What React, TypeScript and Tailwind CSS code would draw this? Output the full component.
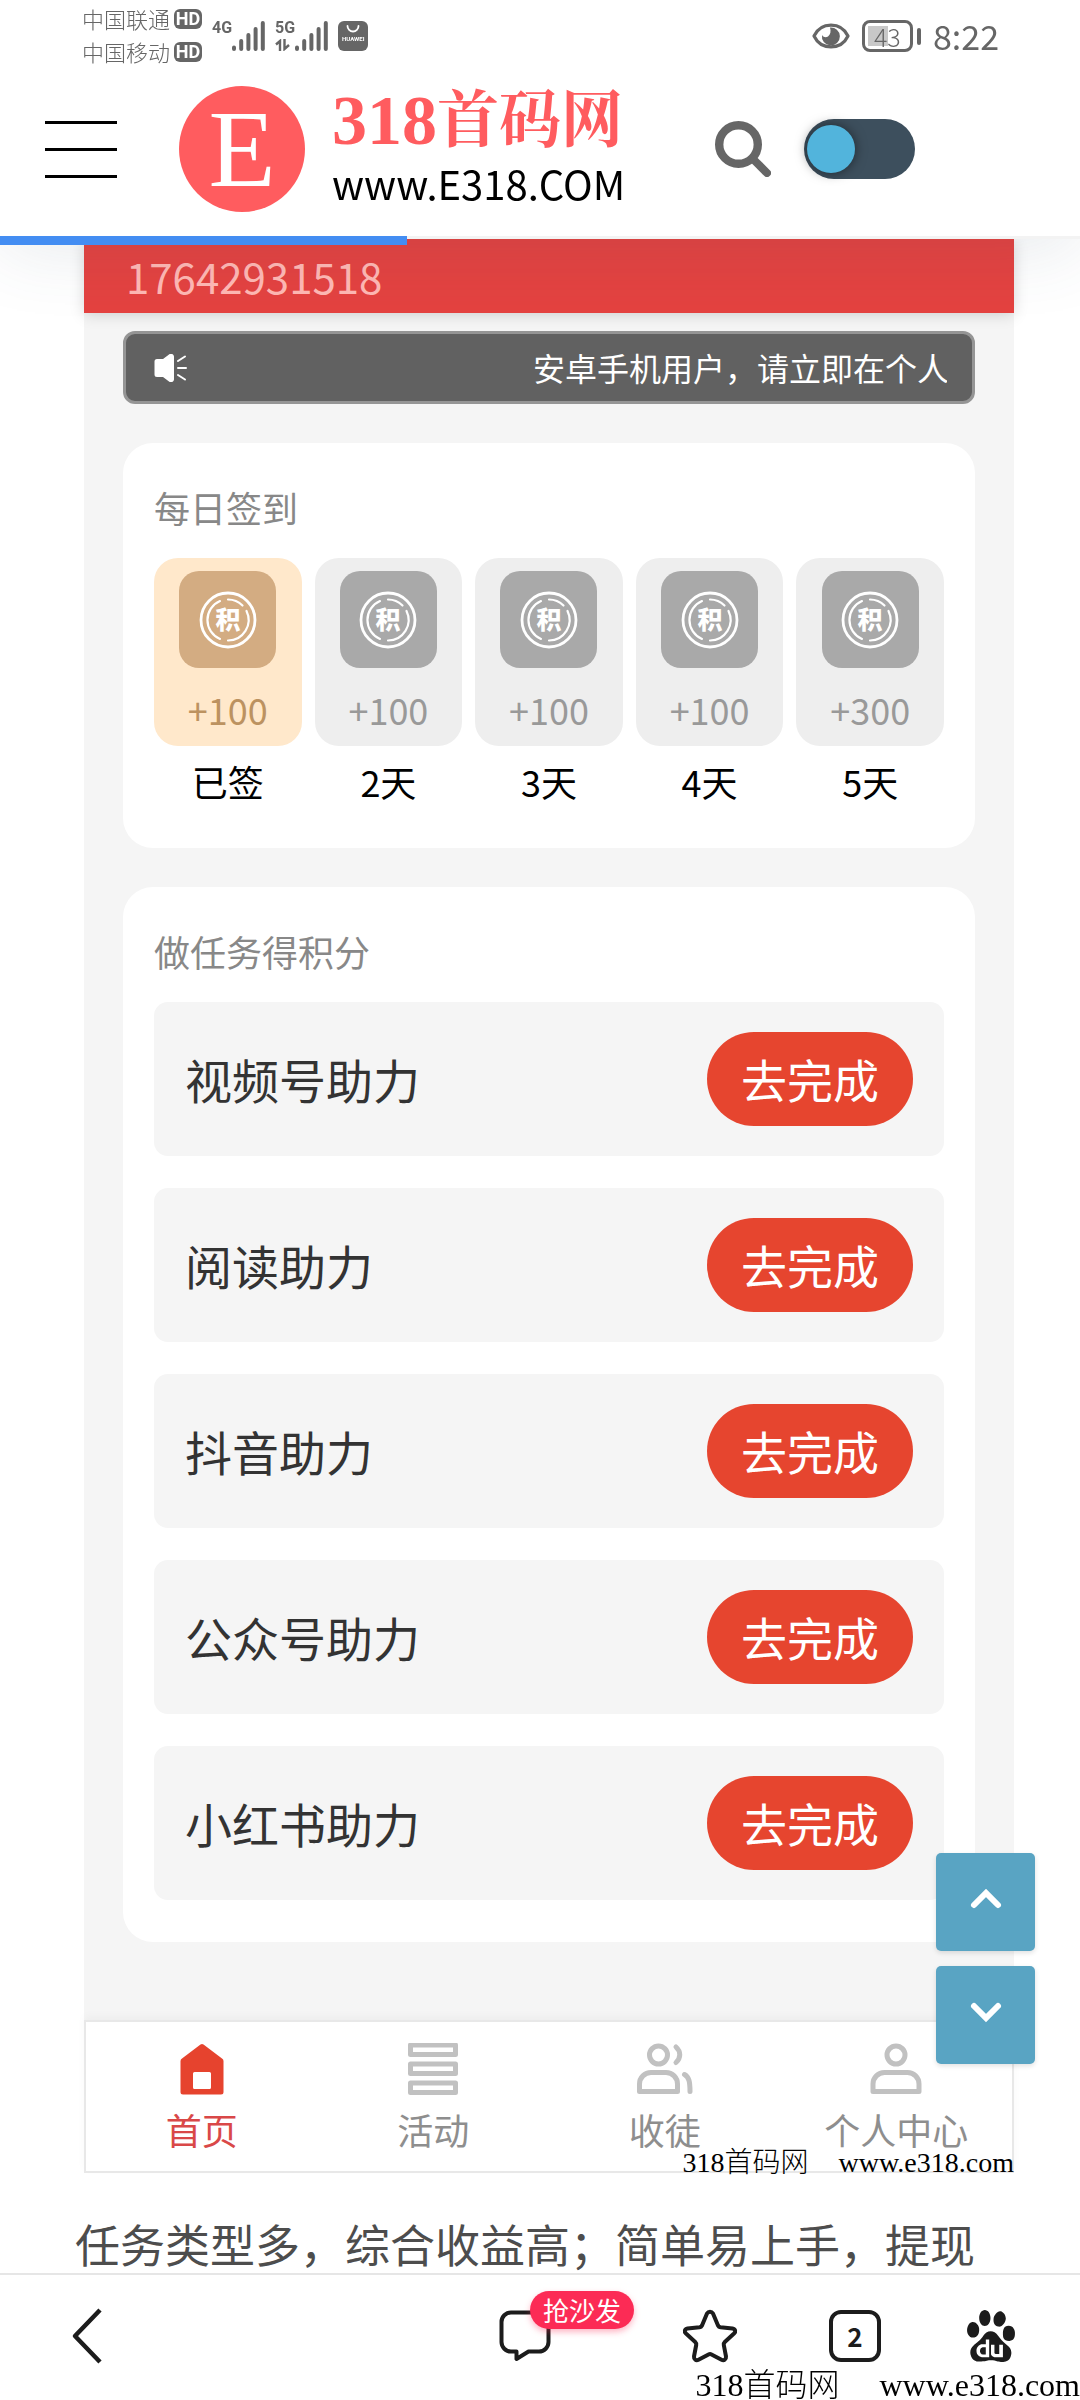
import { useState } from "react";
import clsx from "clsx";
import { SiBaidu } from "react-icons/si";

const loadProgress = 37.7;

const days = [
  { label: "已签", points: "+100", done: true },
  { label: "2天", points: "+100", done: false },
  { label: "3天", points: "+100", done: false },
  { label: "4天", points: "+100", done: false },
  { label: "5天", points: "+300", done: false },
];

const tasks = ["视频号助力", "阅读助力", "抖音助力", "公众号助力", "小红书助力"];

const tabs = [
  { label: "首页", icon: <HomeIcon />, active: true },
  { label: "活动", icon: <ListIcon />, active: false },
  { label: "收徒", icon: <PeopleIcon />, active: false },
  { label: "个人中心", icon: <PersonIcon />, active: false },
];

/* --- ICONS --- */
function HomeIcon() {
  return (
    <svg viewBox="0 0 44 52" className="h-[52px] w-11" fill="#e6432e">
      <path
        fillRule="evenodd"
        d="M20.500 1.500a2.500 2.500 0 0 1 3 0L42 15.500a3 3 0 0 1 1.500 2.500V49a2.500 2.500 0 0 1-2.500 2.500H3A2.500 2.500 0 0 1 .5 49V18A3 3 0 0 1 2 15.500ZM14.500 29a1.500 1.500 0 0 0-1.500 1.500V44.500A1.500 1.500 0 0 0 14.500 46h15a1.500 1.500 0 0 0 1.500-1.500V30.500A1.500 1.500 0 0 0 29.500 29Z"
      />
    </svg>
  );
}

function ListIcon() {
  return (
    <svg viewBox="0 0 50 52" className="h-[52px] w-[50px]" fill="none" stroke="#c1c1c1" strokeWidth="5" strokeLinejoin="round">
      <rect x="2.500" y="2" width="45" height="9.500" />
      <rect x="2.500" y="21" width="45" height="9.500" />
      <rect x="2.500" y="40" width="45" height="9.500" />
    </svg>
  );
}

function PeopleIcon() {
  return (
    <svg viewBox="0 0 56 52" className="h-[52px] w-14" fill="none" stroke="#c1c1c1" strokeWidth="5" strokeLinecap="round" strokeLinejoin="round">
      <circle cx="21.500" cy="12" r="9" />
      <path d="M2.500 48.500V41a11.500 11.500 0 0 1 11.500-11.500H29A11.500 11.500 0 0 1 40.500 41v7.500Z" />
      <path d="M39 4c5 4.500 5 11 0 15.500M47.500 31.500c4.500 2.500 5.500 7 5.500 17" />
    </svg>
  );
}

function PersonIcon() {
  return (
    <svg viewBox="0 0 52 52" className="h-[52px] w-[52px]" fill="none" stroke="#c1c1c1" strokeWidth="5" strokeLinejoin="round">
      <circle cx="26" cy="12" r="9" />
      <path d="M3 48.500V41a11.500 11.500 0 0 1 11.500-11.500H37.500A11.500 11.500 0 0 1 49 41v7.500Z" />
    </svg>
  );
}

function CoinIcon() {
  return (
    <svg viewBox="-29 -29 58 58" className="h-[58px] w-[58px]" fill="none" stroke="#fff" strokeLinecap="round">
      <circle r="27" strokeWidth="2.800" />
      <path strokeWidth="2.200" d="M0-20.500A20.500 20.500 0 0 1 14.500-14.500M18.500-9A20.500 20.500 0 0 1 0 20.500M-8 18.900A20.500 20.500 0 0 1-8-18.900" />
      <text
        y="9"
        textAnchor="middle"
        fill="#fff"
        stroke="none"
        className="font-['Noto_Sans_CJK_SC',sans-serif] text-[25px] font-black"
      >
        积
      </text>
    </svg>
  );
}

function SignalIcon() {
  return (
    <svg viewBox="0 0 33 30" className="h-[30px] w-[33px]" stroke="#666" strokeWidth="4" strokeLinecap="round">
      <path d="M2 26.500v1.500M9.200 20v8M16.400 14v14M23.600 8v20M30.800 2v26" />
    </svg>
  );
}

function DataArrowsIcon() {
  return (
    <svg viewBox="0 0 16 12" className="h-3 w-4" fill="none" stroke="#666" strokeWidth="2.400">
      <path d="M1 5.500 5 2v10M9.500 0v10l4.500-4" />
    </svg>
  );
}

function EyeIcon() {
  return (
    <svg viewBox="0 0 38 26" className="h-[26px] w-[38px]">
      <path d="M2 13C9-1.500 29-1.500 36 13C29 27.500 9 27.500 2 13Z" fill="none" stroke="#666" strokeWidth="3.200" strokeLinejoin="round" />
      <path d="M18 4.500a9 9 0 1 1-8 7.500c1.500 2.500 4 2.800 6 1.500 2.500-1.800 3.200-5.500 2-9Z" fill="#666" />
    </svg>
  );
}

function SpeakerIcon() {
  return (
    <svg viewBox="0 0 33 28" className="h-7 w-[33px]" fill="#fff">
      <path d="M3 5h6l6-4.500a3 3 0 0 1 5 2v23a3 3 0 0 1-5 2L9 23H3a2.500 2.500 0 0 1-2.500-2.500v-13A2.500 2.500 0 0 1 3 5Z" />
      <path d="m24 7 7-4.500M24 14h8M24 21l7 4.500" stroke="#fff" strokeWidth="2" strokeLinecap="round" />
    </svg>
  );
}

/* --- HEADER --- */
function StatusBar() {
  return (
    <div className="flex items-start justify-between pl-[82px] pr-[81px] pt-0.5 text-[#666]">
      <div className="flex">
        <div className="text-[22px] font-light leading-[33px]">
          {["中国联通", "中国移动"].map((carrier) => (
            <div key={carrier} className="flex items-center gap-1">
              {carrier}
              <span className="flex h-5 w-7 items-center justify-center rounded-md bg-[#666] font-['Roboto',sans-serif] text-[18px] font-bold leading-none text-white">
                HD
              </span>
            </div>
          ))}
        </div>
        <div className="ml-2.5 mt-[19px] flex h-[30px] font-['Roboto',sans-serif] text-[16px] font-bold leading-[14px]">
          <span>4G</span>
          <SignalIcon />
          <div className="ml-2.5 flex flex-col justify-between">
            <span>5G</span>
            <DataArrowsIcon />
          </div>
          <SignalIcon />
          <div className="ml-2.5 flex h-[30px] w-[30px] flex-col items-center rounded-md bg-[#666] pt-1 text-white">
            <svg viewBox="0 0 14 8" className="h-2 w-3.5" fill="none" stroke="#fff" strokeWidth="1.800" strokeLinecap="round">
              <path d="M1.500 1a5.500 5.500 0 0 0 11 0" />
            </svg>
            <span className="text-[6px] leading-[12px]">HUAWEI</span>
          </div>
        </div>
      </div>

      <div className="mt-4 flex items-center">
        <EyeIcon />
        <div className="ml-3 flex h-8 w-[51px] items-center rounded-lg border-[3px] border-[#666] p-[3px]">
          <div className="flex h-5 w-5 items-center bg-[#c8c8c8] pl-1.5">
            <span className="text-[25px] font-light leading-none">43</span>
          </div>
        </div>
        <div className="ml-1 h-[17px] w-1 rounded-full bg-[#666]" />
        <span className="ml-3 text-[34px] leading-9">8:22</span>
      </div>
    </div>
  );
}

function Header() {
  const [dark, setDark] = useState(false);

  return (
    <header className="relative z-10 border-b-[3px] border-[#f3f3f3] bg-white shadow-[0_10px_70px_rgba(60,85,105,0.12)]">
      <StatusBar />
      <div className="flex items-center pb-6 pl-[45px] pr-[165px] pt-[18px]">
        <button aria-label="菜单" className="flex w-[72px] flex-col gap-6">
          <span className="h-[3px] bg-black" />
          <span className="h-[3px] bg-black" />
          <span className="h-[3px] bg-black" />
        </button>

        <a href="#" className="ml-[62px] flex items-center gap-[27px]">
          <span className="flex h-[126px] w-[126px] items-center justify-center rounded-full bg-[#ff5c5f] font-['Liberation_Serif',serif] text-[110px] leading-none text-white">
            E
          </span>
          <span className="flex flex-col whitespace-nowrap">
            <span className="flex items-center font-['Liberation_Serif','Noto_Serif_CJK_SC','Noto_Sans_CJK_SC',serif] font-bold leading-[68px] text-[#ff5c5f]">
              <span className="text-[70px]">318</span>
              <span className="text-[62px]">首码网</span>
            </span>
            <span className="text-[40px] leading-[56px] text-black">www.E318.COM</span>
          </span>
        </a>

        <button aria-label="搜索" className="ml-auto">
          <svg viewBox="0 0 56 56" className="h-14 w-14" fill="none" stroke="#666">
            <circle cx="23.500" cy="23.500" r="19.300" strokeWidth="8.400" />
            <path d="m39 39 13 13" strokeWidth="8" strokeLinecap="round" />
          </svg>
        </button>
        <label className="relative ml-[33px] block h-[60px] w-[111px] rounded-full bg-[#3d4f5d]">
          <span className="sr-only">夜间模式</span>
          <input type="checkbox" className="peer sr-only" checked={dark} onChange={() => setDark(!dark)} />
          <span className="absolute left-[3px] top-1.5 h-12 w-12 rounded-full bg-[#52b4dc] shadow-[0_0_12px_rgba(0,0,0,0.5)] peer-checked:left-[60px]" />
        </label>
      </div>
      <div className="absolute left-0 top-full h-[9px] bg-[#438df2]" style={{ width: `${loadProgress}%` }} />
    </header>
  );
}

/* --- APP PANEL --- */
function CheckIn() {
  return (
    <section className="mt-[39px] rounded-[30px] bg-white px-[31px] pb-[41px] pt-[38px]">
      <h2 className="mb-[25px] text-[36px] leading-[52px] text-[#888]">每日签到</h2>
      <div className="grid grid-cols-5 gap-[13px]">
        {days.map((day) => (
          <div key={day.label} className="text-center text-[36px] leading-[52px]">
            <div
              className={clsx(
                "flex flex-col items-center rounded-3xl pb-[11px] pt-[13px]",
                day.done ? "bg-[#ffe8cb] text-[#bc9260]" : "bg-[#eee] text-[#999]"
              )}
            >
              <div
                className={clsx(
                  "mb-[15px] flex h-[97px] w-[97px] items-center justify-center rounded-[20px]",
                  day.done ? "bg-[#d3ac82]" : "bg-[#a9a9a9]"
                )}
              >
                <CoinIcon />
              </div>
              {day.points}
            </div>
            <div className="mt-[9px] text-black">{day.label}</div>
          </div>
        ))}
      </div>
    </section>
  );
}

function TaskList() {
  return (
    <section className="mt-[39px] rounded-[30px] bg-white px-[31px] pb-[42px] pt-[38px]">
      <h2 className="mb-[25px] text-[36px] leading-[52px] text-[#888]">做任务得积分</h2>
      <ul className="flex flex-col gap-8">
        {tasks.map((task) => (
          <li key={task} className="flex items-center justify-between rounded-[14px] bg-[#f5f5f5] px-[31px] py-[30px]">
            <span className="text-[47px] leading-[52px] text-[#333]">{task}</span>
            <button className="rounded-full bg-[#e6452f] px-[34px] pb-[22px] pt-5 text-[46px] leading-[52px] text-white">
              去完成
            </button>
          </li>
        ))}
      </ul>
    </section>
  );
}

function TabBar() {
  return (
    <nav className="relative mt-[78px] grid grid-cols-4 border-2 border-[#e8e8e8] bg-white pb-4 pt-[21px] shadow-[0_-4px_8px_rgba(0,0,0,0.03)]">
      {tabs.map((tab) => (
        <a
          key={tab.label}
          href="#"
          className={clsx(
            "flex flex-col items-center gap-2 text-[36px] leading-[52px]",
            tab.active ? "text-[#d94848]" : "text-[#8e8e8e]"
          )}
        >
          {tab.icon}
          {tab.label}
        </a>
      ))}
      <p className="absolute -bottom-2 -right-0.5 flex gap-[30px] whitespace-nowrap font-['Liberation_Serif','Noto_Sans_CJK_SC',serif] text-[28px] font-light leading-8 text-black">
        <span>318首码网</span>
        <span>www.e318.com</span>
      </p>
    </nav>
  );
}

/* --- BROWSER BAR --- */
function BrowserBar() {
  return (
    <footer className="sticky bottom-0 flex items-center border-t-2 border-[#e6e6e6] bg-white pb-[37px] pl-[72px] pr-[63px] pt-[35px] text-[#1c1c1c]">
      <button aria-label="返回">
        <svg viewBox="0 0 30 52" className="h-[52px] w-[30px] overflow-visible" fill="none" stroke="currentColor" strokeWidth="4.500" strokeLinejoin="round">
          <path d="M28 0 3 26l25 26" />
        </svg>
      </button>
      <button className="relative ml-auto">
        <svg viewBox="0 0 52 52" className="h-[52px] w-[52px]" fill="none" stroke="currentColor" strokeWidth="4" strokeLinejoin="round">
          <path d="M12 2.500H40A9.500 9.500 0 0 1 49.500 12V32A9.500 9.500 0 0 1 40 41.500H29.500L17.500 49V41.500H12A9.500 9.500 0 0 1 2.500 32V12A9.500 9.500 0 0 1 12 2.500Z" />
        </svg>
        <span className="absolute -top-[19px] left-[31px] whitespace-nowrap rounded-full bg-[#fc2b55] px-[13px] text-[26px] leading-[38px] text-white shadow-[0_3px_6px_rgba(252,43,85,0.35)]">
          抢沙发
        </span>
      </button>
      <button aria-label="收藏" className="ml-[133px]">
        <svg viewBox="0 0 52 52" className="h-[52px] w-[52px] overflow-visible" fill="none" stroke="currentColor" strokeWidth="4" strokeLinejoin="round">
          <path d="M23 3.500C24.500 1 27.500 1 29 3.500L34 15.500Q34.800 17 36.500 17.300L48.500 18.500C51.500 19 52 21.500 50 23.500L40.800 32Q39.500 33.300 39.800 35L42 46.500C42.300 49.500 40 51 37.500 49.700L27.500 44.500Q26 43.700 24.500 44.500L14.500 49.700C12 51 9.700 49.500 10 46.500L12.200 35Q12.500 33.300 11.200 32L2 23.500C0 21.500.5 19 3.500 18.500L15.500 17.300Q17.200 17 18 15.500Z" />
        </svg>
      </button>
      <button
        aria-label="标签页"
        className="ml-[93px] flex h-[52px] w-[52px] items-center justify-center rounded-xl border-4 border-current text-[26px] font-bold leading-none"
      >
        2
      </button>
      <button aria-label="百度" className="ml-[84px]">
        <SiBaidu className="h-[52px] w-[52px]" />
      </button>
      <p className="absolute -bottom-1 right-0 flex gap-10 whitespace-nowrap font-['Liberation_Serif','Noto_Sans_CJK_SC',serif] text-[32px] font-light leading-9 text-black">
        <span>318首码网</span>
        <span>www.e318.com</span>
      </p>
    </footer>
  );
}

function ScrollButtons() {
  return (
    <div className="fixed bottom-[336px] right-[45px] z-20 flex flex-col gap-[15px]">
      {["M3 15 15 3l12 12", "M3 3l12 12L27 3"].map((d, i) => (
        <button
          key={d}
          aria-label={i === 0 ? "向上" : "向下"}
          className="flex h-[98px] w-[99px] items-center justify-center rounded-[5px] bg-[#59a4c3] pb-1.5 shadow-[0_2px_5px_rgba(0,0,0,0.12)]"
        >
          <svg viewBox="0 0 30 18" className="h-[18px] w-[30px] overflow-visible" fill="none" stroke="#fff" strokeWidth="6" strokeLinecap="round">
            <path d={d} />
          </svg>
        </button>
      ))}
    </div>
  );
}

export default function App() {
  return (
    <div className="min-h-screen bg-white font-['Noto_Sans_CJK_SC',sans-serif]">
      <Header />
      <main>
        <div className="ml-[84px] mr-[66px] bg-[#f5f5f5]">
          <div className="bg-[#e44240] pb-[11px] pl-[42px] pt-[11px] text-[42px] leading-[52px] text-[#ffb8b4] shadow-[0_2px_14px_rgba(0,0,0,0.15)]">
            17642931518
          </div>
          <div className="px-[39px]">
            <div className="relative mt-[18px] flex items-center rounded-xl border-[3px] border-[#959595] bg-[#616161] py-[9px] pl-7 pr-[25px]">
              <SpeakerIcon />
              <div className="ml-3 flex-1 overflow-hidden">
                <p className="w-0 whitespace-nowrap pl-[334px] text-[32px] leading-[49px] text-white">
                  安卓手机用户，请立即在个人中心
                </p>
              </div>
            </div>
            <CheckIn />
            <TaskList />
          </div>
          <TabBar />
        </div>
        <p className="mt-[42px] overflow-hidden whitespace-nowrap pl-[75px] text-[45px] leading-[58px] text-[#4d4d4d]">
          任务类型多，综合收益高；简单易上手，提现
        </p>
      </main>
      <BrowserBar />
      <ScrollButtons />
    </div>
  );
}
